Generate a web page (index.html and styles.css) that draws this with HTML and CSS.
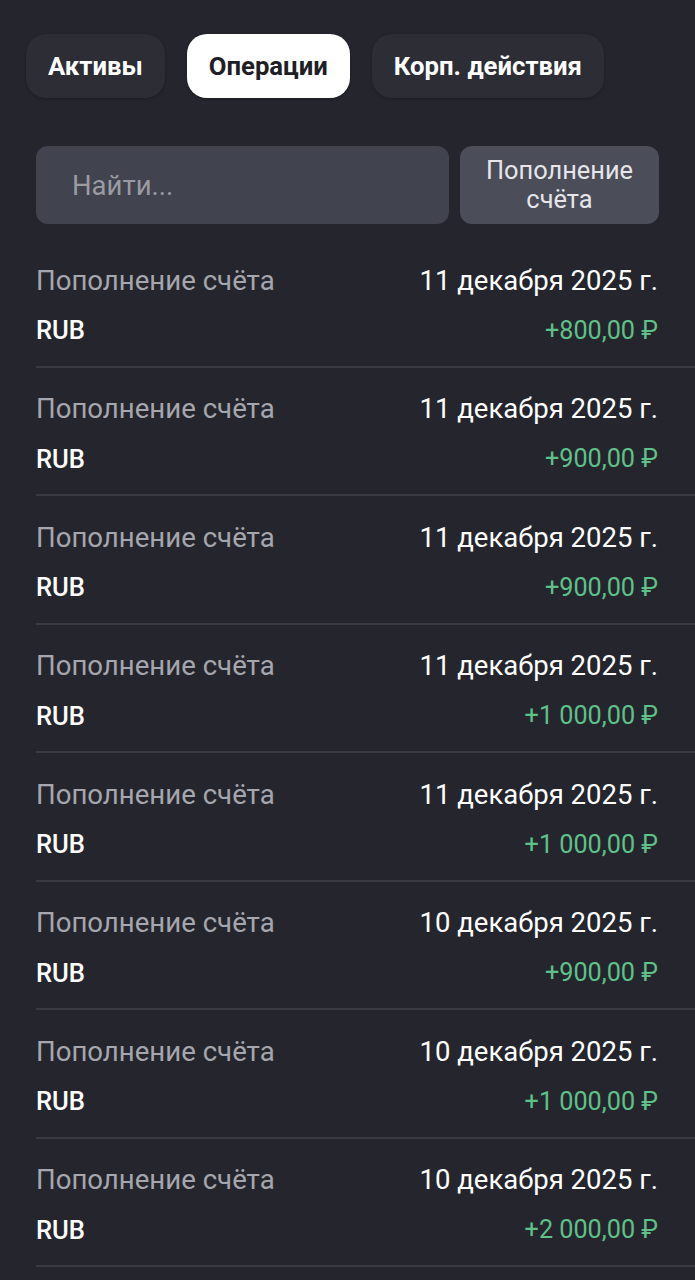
FILE: index.html
```html
<!DOCTYPE html>
<html lang="ru">
<head>
<meta charset="utf-8">
<link rel="stylesheet" href="styles.css">
</head>
<body>
<div class="page">
  <nav class="tabs">
    <div class="tab">Активы</div>
    <div class="tab active">Операции</div>
    <div class="tab">Корп. действия</div>
  </nav>
  <div class="toolbar">
    <div class="search">Найти...</div>
    <div class="filter">Пополнение<br>счёта</div>
  </div>
  <ul class="ops">
    <li class="op"><div class="line"><span class="title">Пополнение счёта</span><span class="date">11 декабря 2025 г.</span></div><div class="line"><span class="cur">RUB</span><span class="amt">+800,00 ₽</span></div></li>
    <li class="op"><div class="line"><span class="title">Пополнение счёта</span><span class="date">11 декабря 2025 г.</span></div><div class="line"><span class="cur">RUB</span><span class="amt">+900,00 ₽</span></div></li>
    <li class="op"><div class="line"><span class="title">Пополнение счёта</span><span class="date">11 декабря 2025 г.</span></div><div class="line"><span class="cur">RUB</span><span class="amt">+900,00 ₽</span></div></li>
    <li class="op"><div class="line"><span class="title">Пополнение счёта</span><span class="date">11 декабря 2025 г.</span></div><div class="line"><span class="cur">RUB</span><span class="amt">+1 000,00 ₽</span></div></li>
    <li class="op"><div class="line"><span class="title">Пополнение счёта</span><span class="date">11 декабря 2025 г.</span></div><div class="line"><span class="cur">RUB</span><span class="amt">+1 000,00 ₽</span></div></li>
    <li class="op"><div class="line"><span class="title">Пополнение счёта</span><span class="date">10 декабря 2025 г.</span></div><div class="line"><span class="cur">RUB</span><span class="amt">+900,00 ₽</span></div></li>
    <li class="op"><div class="line"><span class="title">Пополнение счёта</span><span class="date">10 декабря 2025 г.</span></div><div class="line"><span class="cur">RUB</span><span class="amt">+1 000,00 ₽</span></div></li>
    <li class="op"><div class="line"><span class="title">Пополнение счёта</span><span class="date">10 декабря 2025 г.</span></div><div class="line"><span class="cur">RUB</span><span class="amt">+2 000,00 ₽</span></div></li>
  </ul>
</div>
</body>
</html>
```
FILE: styles.css
```css
html, body {
  margin: 0;
  padding: 0;
  background: #25262d;
  height: 100%;
}
body {
  font-family: Roboto, "Noto Sans", sans-serif;
  color: #ffffff;
  overflow: hidden;
}
.page {
  padding-top: 34px;
}
.tabs {
  display: flex;
  gap: 22px;
  padding-left: 26px;
}
.tab {
  height: 64px;
  padding: 0 22px;
  display: flex;
  align-items: center;
  border-radius: 20px;
  background: #2c2d35;
  font-size: 25.7px;
  font-weight: 700;
  color: #ffffff;
  box-shadow: 0 1px 3px rgba(0, 0, 0, 0.25);
}
.tab.active {
  background: #ffffff;
  color: #1f2026;
}
.toolbar {
  display: flex;
  gap: 11px;
  margin: 48px 36px 0 36px;
}
.search {
  flex: 1;
  height: 78px;
  border-radius: 12px;
  background: #41434e;
  display: flex;
  align-items: center;
  padding-left: 36px;
  font-size: 27.5px;
  color: #9a9ba3;
}
.filter {
  width: 199px;
  height: 78px;
  border-radius: 12px;
  background: #4b4d58;
  display: flex;
  align-items: center;
  justify-content: center;
  text-align: center;
  font-size: 25.4px;
  line-height: 29px;
  color: #e6e6ea;
}
.ops {
  list-style: none;
  margin: 15px 0 0 36px;
  padding: 0;
}
.op {
  border-bottom: 2px solid #393a42;
  padding: 21px 37px 15.5px 0;
  display: flex;
  flex-direction: column;
  gap: 10px;
}
.line {
  display: flex;
  justify-content: space-between;
  align-items: center;
  height: 40px;
}
.title {
  font-size: 27.6px;
  color: #a6a7ae;
}
.date {
  font-size: 27.5px;
  color: #ffffff;
}
.cur {
  font-size: 25.6px;
  font-weight: 500;
  color: #ffffff;
}
.amt {
  font-size: 25.2px;
  color: #5fc18a;
}
```
